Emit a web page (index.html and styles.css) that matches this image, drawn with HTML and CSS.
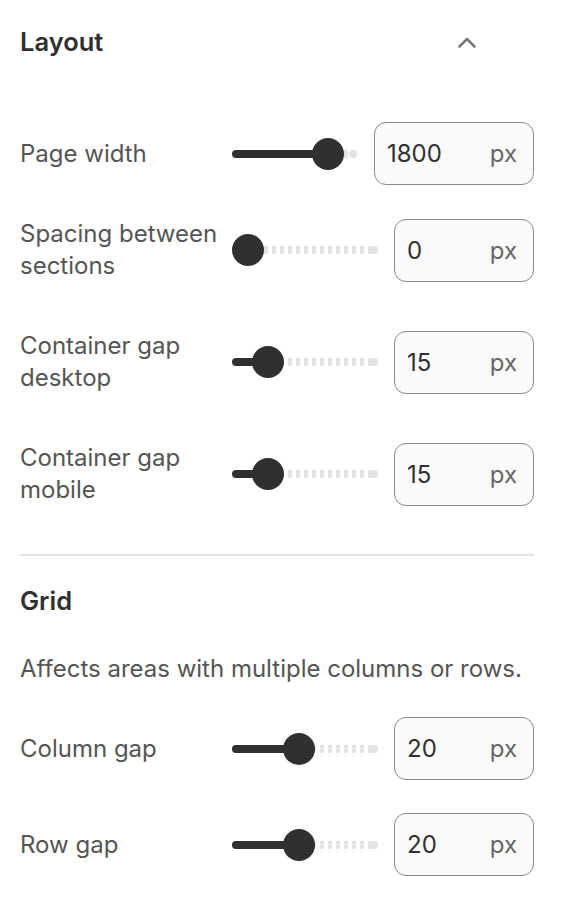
FILE: index.html
```html
<html lang="en">
<head>
  <link rel="stylesheet" href="styles.css">
</head>
<body>
  <div class="panel">
    <div class="head">
      <h2 class="titulo">Layout</h2>
      <svg class="chevron" width="20" height="16" viewBox="0 0 20 16">
        <path d="M2.5 12.5 L10 5 L17.5 12.5" fill="none" stroke="#7a7a7a" stroke-width="2.6" stroke-linecap="round" stroke-linejoin="round"/>
      </svg>
    </div>

    <div class="campos">
      <div class="campo uno">
        <div class="etiqueta">Page width</div>
        <div class="rango"><div class="lleno" style="width:96px"></div><span class="bola" style="left:80px"></span></div>
        <div class="numero ancho"><span>1800</span><span class="unidad">px</span></div>
      </div>

      <div class="campo dos">
        <div class="etiqueta">Spacing between sections</div>
        <div class="rango"><div class="lleno" style="width:0px"></div><span class="bola" style="left:0px"></span></div>
        <div class="numero"><span>0</span><span class="unidad">px</span></div>
      </div>

      <div class="campo dos">
        <div class="etiqueta">Container gap desktop</div>
        <div class="rango"><div class="lleno" style="width:36px"></div><span class="bola" style="left:20px"></span></div>
        <div class="numero"><span>15</span><span class="unidad">px</span></div>
      </div>

      <div class="campo dos">
        <div class="etiqueta">Container gap mobile</div>
        <div class="rango"><div class="lleno" style="width:36px"></div><span class="bola" style="left:20px"></span></div>
        <div class="numero"><span>15</span><span class="unidad">px</span></div>
      </div>
    </div>

    <div class="linea"></div>

    <h3 class="subtitulo">Grid</h3>
    <p class="nota">Affects areas with multiple columns or rows.</p>

    <div class="campos">
      <div class="campo uno">
        <div class="etiqueta">Column gap</div>
        <div class="rango"><div class="lleno" style="width:67px"></div><span class="bola" style="left:51px"></span></div>
        <div class="numero"><span>20</span><span class="unidad">px</span></div>
      </div>

      <div class="campo uno">
        <div class="etiqueta">Row gap</div>
        <div class="rango"><div class="lleno" style="width:67px"></div><span class="bola" style="left:51px"></span></div>
        <div class="numero"><span>20</span><span class="unidad">px</span></div>
      </div>
    </div>
  </div>
</body>
</html>
```

FILE: styles.css
```css
body {
    margin: 0;
    background: #ffffff;
    font-family: Inter, "Liberation Sans", sans-serif;
    color: #303030;
}

.panel {
    padding: 24px 28px 0 20px;
}

.head {
    display: flex;
    align-items: center;
    justify-content: space-between;
    height: 36px;
    padding-right: 57px;
}

.titulo {
    margin: 0;
    font-size: 25.5px;
    font-weight: 600;
    line-height: 36px;
}

.chevron {
    display: block;
}

.campos {
    display: flex;
    flex-direction: column;
}

.head + .campos {
    margin-top: 62px;
}

.campo {
    display: flex;
    align-items: center;
}

.campo.uno {
    margin-bottom: 33px;
}

.campo.dos {
    margin-bottom: 48px;
}

.campos .campo:last-child.uno {
    margin-bottom: 0;
}

.etiqueta {
    flex: 0 0 212px;
    font-size: 24px;
    line-height: 32px;
    color: #555555;
}

.rango {
    position: relative;
    flex: 1;
    height: 32px;
}

.rango::before {
    content: "";
    position: absolute;
    left: 0;
    right: 0;
    top: 12px;
    height: 8px;
    border-radius: 4px;
    background: repeating-linear-gradient(to right, #e3e3e3 0 4px, transparent 4px 8px);
}

.rango::after {
    content: "";
    position: absolute;
    right: 0;
    top: 12px;
    width: 8px;
    height: 8px;
    border-radius: 4px;
    background: #e3e3e3;
}

.lleno {
    position: absolute;
    left: 0;
    top: 12px;
    height: 8px;
    border-radius: 4px;
    background: #303030;
}

.bola {
    position: absolute;
    top: 0;
    width: 32px;
    height: 32px;
    border-radius: 50%;
    background: #303030;
}

.numero {
    flex: 0 0 140px;
    margin-left: 16px;
    box-sizing: border-box;
    height: 63px;
    display: flex;
    align-items: center;
    justify-content: space-between;
    padding: 0 16px 0 12px;
    border: 1px solid #8a8a8a;
    border-radius: 12px;
    background: #fafafa;
    font-size: 24px;
}

.numero.ancho {
    flex-basis: 160px;
    margin-left: 17px;
}

.unidad {
    color: #666666;
}

.linea {
    height: 2px;
    background: #e3e3e3;
    margin-bottom: 29px;
}

.subtitulo {
    margin: 0;
    font-size: 25.5px;
    font-weight: 600;
    line-height: 32px;
}

.nota {
    margin: 36px 0 32px 0;
    font-size: 24px;
    line-height: 32px;
    color: #555555;
}
```
